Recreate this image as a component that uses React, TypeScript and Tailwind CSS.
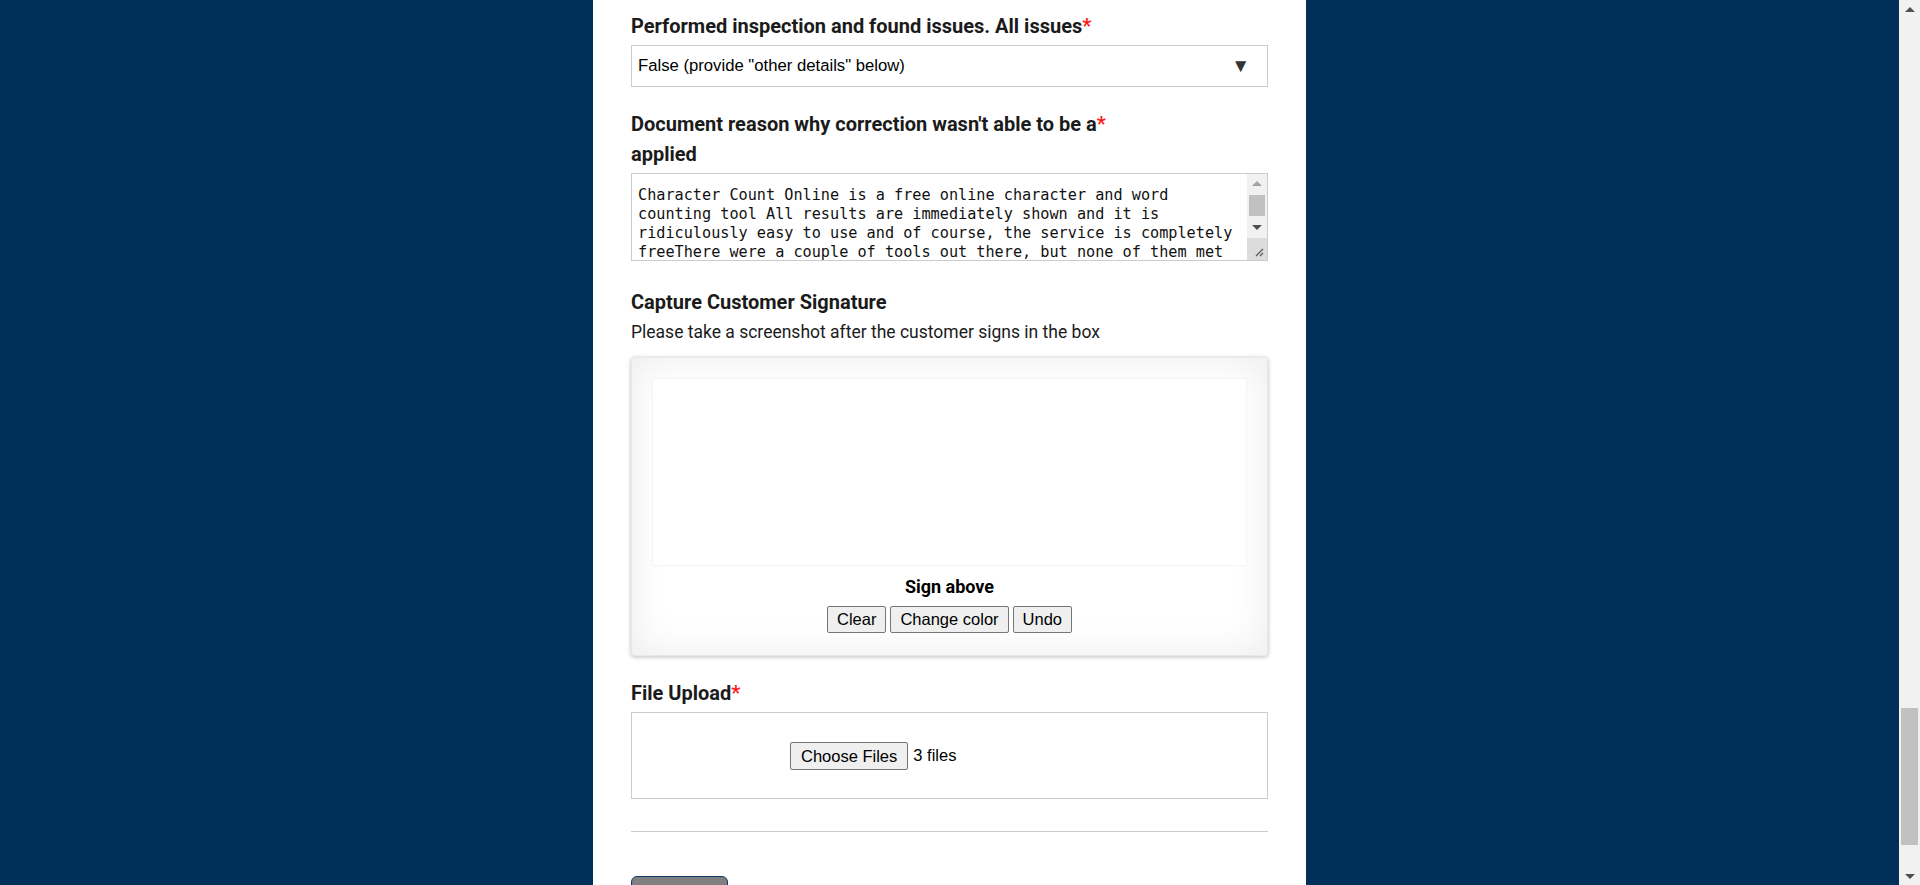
import React from "react";

const notes =
  "Character Count Online is a free online character and word counting tool All results are immediately shown and it is ridiculously easy to use and of course, the service is completely freeThere were a couple of tools out there, but none of them met our needs, so we decided to build our own. Character Count Online is a free online character and word counting tool All results are immediately shown and it is ridiculously easy to use and of course, the service is completely free.";

function Required() {
  return <span className="text-[#ff1a1a]">*</span>;
}

function FieldLabel({ children, required }: { children: React.ReactNode; required?: boolean }) {
  return (
    <label className="block text-[20px] font-bold leading-[30px] text-[#1b1b1b]">
      {children}
      {required && <Required />}
    </label>
  );
}

function Arrow({ down, color = "#505050" }: { down?: boolean; color?: string }) {
  return (
    <svg width="10" height="6" viewBox="0 0 10 6">
      <path d={down ? "M0 0 L5 5 L10 0 Z" : "M0 6 L5 1 L10 6 Z"} fill={color} />
    </svg>
  );
}

function PageScrollbar() {
  return (
    <div className="flex w-[21px] flex-col bg-[#f1f1f1]">
      <div className="flex h-[21px] items-center justify-center pb-[4px]">
        <Arrow />
      </div>
      <div className="flex flex-1 flex-col justify-end px-[2px] pb-[19px]">
        <div className="h-[137px] bg-[#c1c1c1]" />
      </div>
      <div className="flex h-[21px] items-center justify-center pt-[4px]">
        <Arrow down />
      </div>
    </div>
  );
}

function NotesBox() {
  return (
    <div className="mt-[4px] flex h-[88px] border border-[#cccccc]">
      <textarea
        readOnly
        defaultValue={notes}
        className="block min-w-0 flex-1 resize-none overflow-hidden px-[6px] pt-[12px] font-['DejaVu_Sans_Mono',monospace] text-[15.2px] leading-[19px] text-[#111] outline-none"
      />
      <div className="flex w-[20px] flex-col bg-[#f1f1f1]">
        <div className="flex h-[17px] items-center justify-center">
          <Arrow color="#a3a3a3" />
        </div>
        <div className="px-[2px] pt-[4px]">
          <div className="h-[21px] bg-[#c1c1c1]" />
        </div>
        <div className="flex h-[17px] items-center justify-center pt-[6px]">
          <Arrow down />
        </div>
        <div className="mt-auto flex h-[22px] items-end justify-end bg-[#dcdcdc] p-[3px]">
          <svg width="9" height="9" viewBox="0 0 9 9">
            <path d="M8 1 L1 8 M8 5 L5 8" stroke="#555" strokeWidth="1.2" />
          </svg>
        </div>
      </div>
    </div>
  );
}

export default function App() {
  return (
    <div className="flex h-[885px] overflow-hidden bg-[#00305a]">
      <div className="flex flex-1 justify-center">
        <main className="w-[713px] bg-white px-[38px] pt-[11px] font-['Roboto',sans-serif] text-[#1b1b1b]">
          <FieldLabel required>Performed inspection and found issues. All issues</FieldLabel>
          <div className="mt-[4px] flex h-[42px] items-center justify-between border border-[#cccccc] pl-[6px] pr-[17px] font-['Liberation_Sans',Arial,sans-serif] text-[16.7px] text-black">
            <span>False (provide "other details" below)</span>
            <span className="text-[19px] text-[#333]">▼</span>
          </div>

          <div className="mt-[22px]">
            <FieldLabel>
              Document reason why correction wasn't able to be a<Required />
              <br />
              applied
            </FieldLabel>
          </div>
          <NotesBox />

          <div className="mt-[26px]">
            <FieldLabel>Capture Customer Signature</FieldLabel>
          </div>
          <p className="mt-[2px] text-[17.5px] leading-[26px] text-[#1b1b1b]">
            Please take a screenshot after the customer signs in the box
          </p>

          <div className="mt-[12px] h-[299px] rounded-[4px] border border-[#e8e8e8] bg-white p-[20px] pb-[21px] shadow-[0_1px_4px_rgba(0,0,0,0.27),inset_0_0_40px_rgba(0,0,0,0.08)]">
            <div className="h-[188px] border border-[#f4f4f4] bg-white" />
            <div className="mt-[10px] text-center text-[18px] font-bold leading-[22px] text-black">Sign above</div>
            <div className="mt-[8px] flex justify-center gap-[4px] font-['Liberation_Sans',Arial,sans-serif] text-[16.5px] text-black">
              {["Clear", "Change color", "Undo"].map((b) => (
                <button
                  key={b}
                  className="h-[27px] rounded-[2px] border border-[#767676] bg-[#efefef] px-[9px] leading-[25px]"
                >
                  {b}
                </button>
              ))}
            </div>
          </div>

          <div className="mt-[22px]">
            <FieldLabel required>File Upload</FieldLabel>
          </div>
          <div className="mt-[4px] flex h-[87px] items-center border border-[#cccccc] pl-[158px] font-['Liberation_Sans',Arial,sans-serif] text-[16.5px] text-black">
            <button className="h-[28px] rounded-[2px] border border-[#767676] bg-[#efefef] px-[10px] leading-[26px]">
              Choose Files
            </button>
            <span className="ml-[5px]">3 files</span>
          </div>

          <hr className="mt-[32px] border-t border-[#cccccc]" />

          <button className="mt-[44px] h-[38px] w-[97px] rounded-[6px] border border-[#0f3b66] bg-[#808080] text-[16px] text-white">
            Submit
          </button>
        </main>
      </div>
      <PageScrollbar />
    </div>
  );
}
